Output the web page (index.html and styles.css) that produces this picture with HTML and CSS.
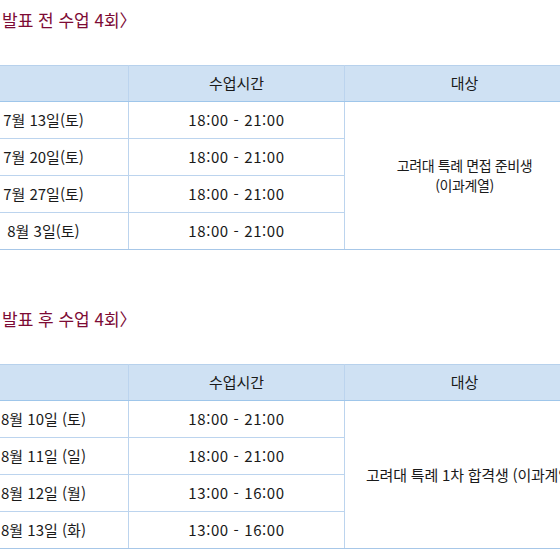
FILE: index.html
```html
<!DOCTYPE html>
<html lang="ko">
<head>
<meta charset="utf-8">
<link rel="stylesheet" href="styles.css">
</head>
<body>
<div class="page">
  <section class="block">
    <h2 class="title">발표 전 수업 4회〉</h2>
    <table class="sched">
      <colgroup><col class="c1"><col class="c2"><col class="c3"></colgroup>
      <thead>
        <tr><th></th><th>수업시간</th><th>대상</th></tr>
      </thead>
      <tbody>
        <tr><td>7월 13일(토)</td><td>18:00 - 21:00</td><td rowspan="4" class="target narrow">고려대 특례 면접 준비생<br>(이과계열)</td></tr>
        <tr><td>7월 20일(토)</td><td>18:00 - 21:00</td></tr>
        <tr><td>7월 27일(토)</td><td>18:00 - 21:00</td></tr>
        <tr><td>8월 3일(토)</td><td>18:00 - 21:00</td></tr>
      </tbody>
    </table>
  </section>
  <section class="block second">
    <h2 class="title">발표 후 수업 4회〉</h2>
    <table class="sched">
      <colgroup><col class="c1"><col class="c2"><col class="c3"></colgroup>
      <thead>
        <tr><th></th><th>수업시간</th><th>대상</th></tr>
      </thead>
      <tbody>
        <tr><td>8월 10일 (토)</td><td>18:00 - 21:00</td><td rowspan="4" class="target wide">고려대 특례 1차 합격생 (이과계열)</td></tr>
        <tr><td>8월 11일 (일)</td><td>18:00 - 21:00</td></tr>
        <tr><td>8월 12일 (월)</td><td>13:00 - 16:00</td></tr>
        <tr><td>8월 13일 (화)</td><td>13:00 - 16:00</td></tr>
      </tbody>
    </table>
  </section>
</div>
</body>
</html>
```
FILE: styles.css
```css
html, body {
  margin: 0;
  padding: 0;
  background: #ffffff;
  overflow: hidden;
}
body {
  font-family: "Noto Sans CJK KR", "Noto Sans", sans-serif;
  color: #1a1a1a;
}
.page {
  margin-left: -42px;
  width: 626px;
  padding-top: 8px;
}
.title {
  margin: 0 0 33px 44px;
  font-size: 17px;
  line-height: 24px;
  font-weight: 400;
  color: #7d0b35;
}
.second {
  margin-top: 57px;
}
.sched {
  border-collapse: collapse;
  table-layout: fixed;
  width: 626px;
  font-size: 15px;
}
.c1 { width: 170px; }
.c2 { width: 216px; }
.c3 { width: 240px; }
.sched th, .sched td {
  border: 1px solid #bcd4ee;
  text-align: center;
  line-height: 20px;
  padding: 8px 0;
  font-weight: 400;
  white-space: nowrap;
}
.sched td:nth-child(2) {
  letter-spacing: 0.6px;
}
.sched th {
  background: #cfe1f3;
  padding: 7px 0 8px;
  border-top-color: #b7d1ec;
  border-bottom-color: #9fc6ea;
}
.sched tbody tr:last-child td,
.sched td.target {
  border-bottom-color: #a7c7e8;
}
.sched td.narrow {
  font-size: 14px;
  line-height: 20px;
  letter-spacing: -0.4px;
  padding-top: 0;
  padding-bottom: 2px;
}
.sched td.wide {
  text-align: left;
  padding-left: 21px;
  letter-spacing: -0.2px;
}
```
